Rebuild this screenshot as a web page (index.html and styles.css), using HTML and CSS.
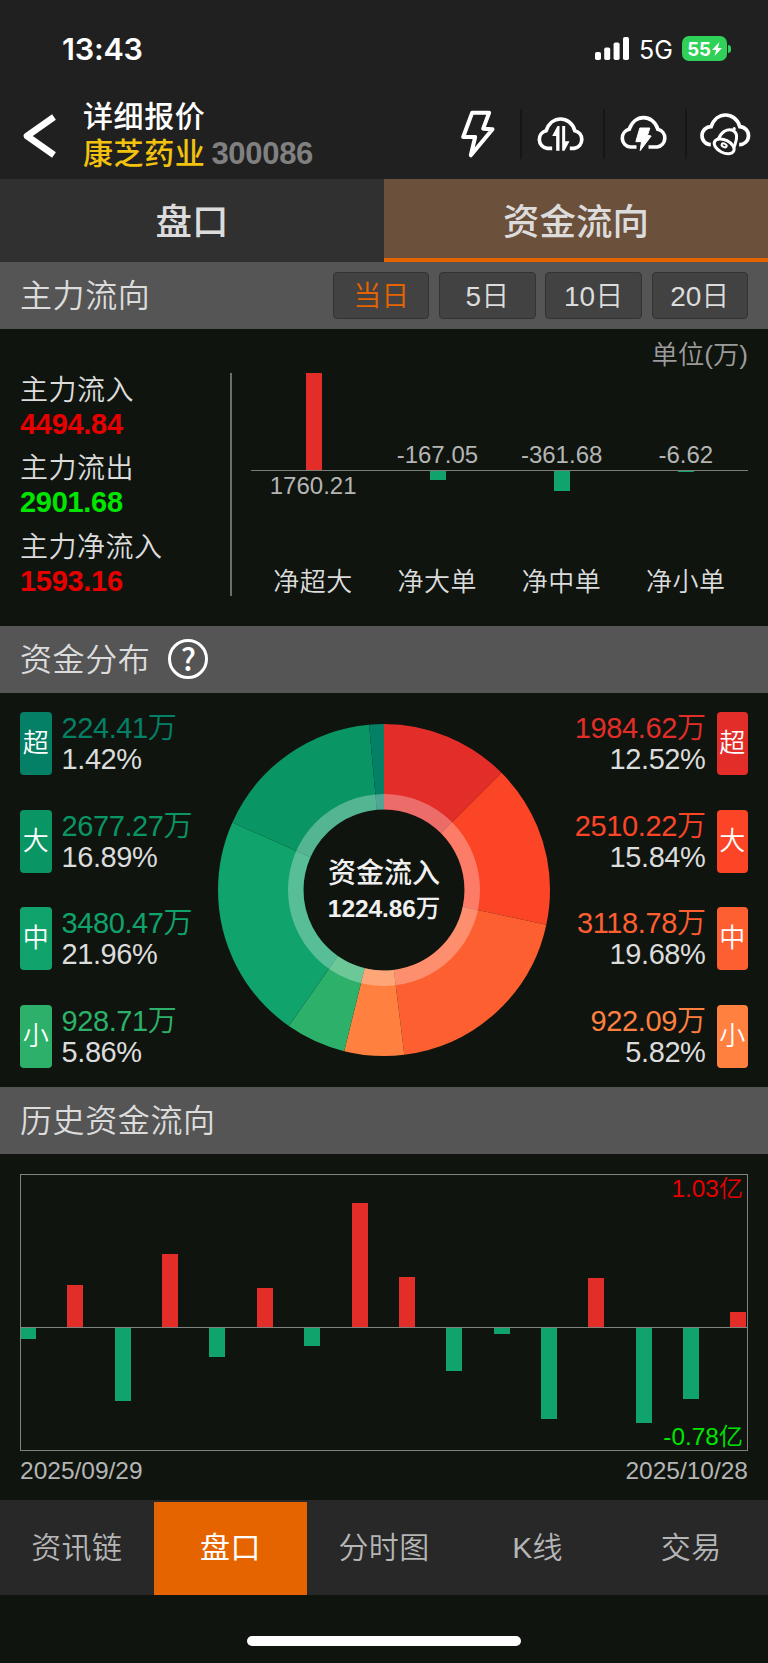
FILE: index.html
```html
<!DOCTYPE html>
<html lang="zh-CN">
<head>
    <meta charset="UTF-8">
    <meta name="viewport" content="width=device-width, initial-scale=1.0">
    <title>康芝药业 300086 - 资金流向</title>
    <link rel="stylesheet" href="styles.css">
</head>
<body>
    <!-- 状态栏 -->
    <div class="status">
        <span class="time">13:43</span>
        <div class="status-right">
            <svg class="signal" width="34" height="23" viewBox="0 0 34 23" fill="#fff">
                <rect x="0" y="15" width="6" height="8" rx="1.8"/>
                <rect x="9.2" y="10.5" width="6" height="12.5" rx="1.8"/>
                <rect x="18.6" y="5.5" width="6" height="17.5" rx="1.8"/>
                <rect x="28" y="0" width="6" height="23" rx="1.8"/>
            </svg>
            <span class="net">5G</span>
            <span class="battery">55<svg width="10" height="14" viewBox="0 0 10 14" fill="#fff"><path d="M7.5 0L0 8h4.2L2.5 14L10 6H5.8z"/></svg></span>
            <span class="battery-cap"></span>
        </div>
    </div>

    <header class="header">
        <svg class="back" width="34" height="46" viewBox="0 0 34 46" fill="none" stroke="#fff" stroke-width="6.6" stroke-linejoin="round">
            <path d="M32 4L5 23L32 42"/>
        </svg>
        <div class="titles">
            <h1>详细报价</h1>
            <p><span class="stock-name">康芝药业</span><span class="stock-code">300086</span></p>
        </div>
        <div class="actions">
            <a class="action">
                <svg viewBox="0 0 248 240" fill="none" stroke="#fff" stroke-width="12" stroke-linejoin="round">
                    <path d="M105 53H156L138 101L166 103L101 181L114 126H78z"/>
                </svg>
            </a>
            <a class="action">
                <svg viewBox="0 0 248 240" fill="none" stroke="#fff" stroke-width="11">
                    <path d="M96 160H81A27 27 0 0 1 78 107C86 84 103 72 121 72S158 84 164 107A27 27 0 0 1 162 160H149"/>
                    <path fill="#fff" stroke="none" d="M108 167V123H96L112 93H118V167zM126 93H135V139H148L133 167H126z"/>
                </svg>
            </a>
            <a class="action">
                <svg viewBox="0 0 248 240" fill="none" stroke="#fff" stroke-width="11">
                    <path d="M100 156H81A27 27 0 0 1 78 103C86 80 103 68 121 68S158 80 164 103A27 27 0 0 1 162 156H136"/>
                    <path fill="#fff" stroke="#fff" stroke-width="3" stroke-linejoin="round" d="M110 99H140L133 121L144 123L111 167L115 140H98z"/>
                </svg>
            </a>
            <a class="action">
                <svg viewBox="0 0 248 240" fill="none" stroke="#fff" stroke-width="11">
                    <path d="M77 149A27 27 0 0 1 78 95C86 72 103 60 121 60S158 72 164 95A27 27 0 0 1 162 149"/>
                    <ellipse cx="117" cy="154" rx="32" ry="19" transform="rotate(27 117 154)" stroke-width="9"/>
                    <ellipse cx="117" cy="151" rx="8" ry="5" transform="rotate(27 117 151)" stroke-width="6"/>
                    <path d="M100 132C108 110 126 101 140 105C160 112 156 132 146 158" stroke-width="9"/>
                    <circle cx="147" cy="101" r="5" fill="#fff" stroke="none"/>
                </svg>
            </a>
        </div>
    </header>

    <nav class="tabs">
        <a class="tab">盘口</a>
        <a class="tab active">资金流向</a>
    </nav>

    <main>
        <!-- 主力流向 -->
        <div class="bar">
            <h2>主力流向</h2>
            <div class="days">
                <button class="day on">当日</button>
                <button class="day">5日</button>
                <button class="day">10日</button>
                <button class="day">20日</button>
            </div>
        </div>
        <section class="flow">
            <p class="unit">单位(万)</p>
            <div class="flow-body">
                <dl class="totals">
                    <dt>主力流入</dt>
                    <dd class="red">4494.84</dd>
                    <dt>主力流出</dt>
                    <dd class="green">2901.68</dd>
                    <dt>主力净流入</dt>
                    <dd class="red">1593.16</dd>
                </dl>
                <div class="net-chart">
                    <div class="net-col">
                        <div class="above"><i class="rise" style="height:97px"></i></div>
                        <div class="below"><span>1760.21</span></div>
                        <p>净超大</p>
                    </div>
                    <div class="net-col">
                        <div class="above"><span>-167.05</span></div>
                        <div class="below"><i class="fall" style="height:9px"></i></div>
                        <p>净大单</p>
                    </div>
                    <div class="net-col">
                        <div class="above"><span>-361.68</span></div>
                        <div class="below"><i class="fall" style="height:20px"></i></div>
                        <p>净中单</p>
                    </div>
                    <div class="net-col">
                        <div class="above"><span>-6.62</span></div>
                        <div class="below"><i class="fall" style="height:1px"></i></div>
                        <p>净小单</p>
                    </div>
                </div>
            </div>
        </section>

        <!-- 资金分布 -->
        <div class="bar">
            <h2>资金分布</h2>
            <span class="help">?</span>
        </div>
        <section class="spread">
            <ul class="legend out">
                <li class="g1"><b>超</b><div><em>224.41万</em><span>1.42%</span></div></li>
                <li class="g2"><b>大</b><div><em>2677.27万</em><span>16.89%</span></div></li>
                <li class="g3"><b>中</b><div><em>3480.47万</em><span>21.96%</span></div></li>
                <li class="g4"><b>小</b><div><em>928.71万</em><span>5.86%</span></div></li>
            </ul>
            <div class="donut">
                <svg width="332" height="332" viewBox="-166 -166 332 332" fill="none">
                    <g stroke-width="85.5" transform="rotate(-90)">
                        <circle r="123.25" pathLength="100" stroke="#e32d28" stroke-dasharray="12.52 100"/>
                        <circle r="123.25" pathLength="100" stroke="#fc4426" stroke-dasharray="15.84 100" stroke-dashoffset="-12.52"/>
                        <circle r="123.25" pathLength="100" stroke="#fd5f31" stroke-dasharray="19.68 100" stroke-dashoffset="-28.36"/>
                        <circle r="123.25" pathLength="100" stroke="#ff803f" stroke-dasharray="5.82 100" stroke-dashoffset="-48.04"/>
                        <circle r="123.25" pathLength="100" stroke="#2db16a" stroke-dasharray="5.86 100" stroke-dashoffset="-53.86"/>
                        <circle r="123.25" pathLength="100" stroke="#10a36b" stroke-dasharray="21.96 100" stroke-dashoffset="-59.72"/>
                        <circle r="123.25" pathLength="100" stroke="#0a9564" stroke-dasharray="16.89 100" stroke-dashoffset="-81.68"/>
                        <circle r="123.25" pathLength="100" stroke="#048066" stroke-dasharray="1.43 100" stroke-dashoffset="-98.57"/>
                    </g>
                    <circle r="88.25" stroke="#fff" stroke-opacity=".3" stroke-width="15.5"/>
                </svg>
                <div class="donut-text">
                    <p>资金流入</p>
                    <strong>1224.86<span>万</span></strong>
                </div>
            </div>
            <ul class="legend in">
                <li class="r1"><div><em>1984.62万</em><span>12.52%</span></div><b>超</b></li>
                <li class="r2"><div><em>2510.22万</em><span>15.84%</span></div><b>大</b></li>
                <li class="r3"><div><em>3118.78万</em><span>19.68%</span></div><b>中</b></li>
                <li class="r4"><div><em>922.09万</em><span>5.82%</span></div><b>小</b></li>
            </ul>
        </section>

        <!-- 历史资金流向 -->
        <div class="bar">
            <h2>历史资金流向</h2>
        </div>
        <section class="history">
            <div class="plot">
                <i class="fall" style="--h:11px"></i>
                <i class="rise" style="--h:42px"></i>
                <i class="fall" style="--h:73px"></i>
                <i class="rise" style="--h:73px"></i>
                <i class="fall" style="--h:29px"></i>
                <i class="rise" style="--h:39px"></i>
                <i class="fall" style="--h:18px"></i>
                <i class="rise" style="--h:124px"></i>
                <i class="rise" style="--h:50px"></i>
                <i class="fall" style="--h:43px"></i>
                <i class="fall" style="--h:6px"></i>
                <i class="fall" style="--h:91px"></i>
                <i class="rise" style="--h:49px"></i>
                <i class="fall" style="--h:95px"></i>
                <i class="fall" style="--h:71px"></i>
                <i class="rise" style="--h:15px"></i>
                <span class="max">1.03亿</span>
                <span class="min">-0.78亿</span>
            </div>
            <div class="dates">
                <span>2025/09/29</span>
                <span>2025/10/28</span>
            </div>
        </section>
    </main>

    <footer class="footer">
        <a>资讯链</a>
        <a class="active">盘口</a>
        <a>分时图</a>
        <a>K线</a>
        <a>交易</a>
    </footer>
    <div class="home"></div>
</body>
</html>
```
FILE: styles.css
```css
* {
    box-sizing: border-box;
    margin: 0;
    padding: 0;
}

body {
    width: 768px;
    height: 1663px;
    background: #0f140f;
    color: #dcdcdc;
    font-family: "Liberation Sans", "Noto Sans CJK SC", sans-serif;
    font-weight: 350;
    overflow: hidden;
}

ul {
    list-style: none;
}

i, em {
    font-style: normal;
}

svg {
    display: block;
}

/* 状态栏 */
.status {
    height: 97px;
    padding: 0 37px 0 62px;
    display: flex;
    justify-content: space-between;
    background: #202020;
    color: #fff;
    font-family: Inter, sans-serif;
}

.time {
    font-size: 30.5px;
    font-weight: 600;
    line-height: 98px;
    letter-spacing: -0.2px;
}

.status-right {
    height: 97px;
    display: flex;
    align-items: center;
}

.net {
    width: 53px;
    padding-left: 10px;
    font-size: 25px;
    font-weight: 400;
    line-height: 26px;
    padding-top: 3px;
}

.battery {
    width: 45px;
    height: 25px;
    display: flex;
    align-items: center;
    justify-content: center;
    gap: 1px;
    border-radius: 7px;
    background: #30d158;
    font-size: 18.5px;
    font-weight: 700;
}

.battery-cap {
    width: 3px;
    height: 8px;
    margin-left: 1px;
    border-radius: 0 3px 3px 0;
    background: #30d158;
}

/* 顶部标题 */
.header {
    height: 82px;
    display: flex;
    background: #202020;
}

.back {
    margin: 16px 0 0 22px;
}

.titles {
    flex: 1;
    margin-left: 27px;
    white-space: nowrap;
}

.titles h1, .stock-name {
    font-size: 30px;
    font-weight: 500;
    letter-spacing: 0.6px;
    color: #fff;
}

.titles h1 {
    line-height: 40px;
}

.titles p {
    display: flex;
    line-height: 34px;
}

.titles .stock-name {
    color: #f3c20f;
}

.stock-code {
    margin-left: 6px;
    font-size: 31px;
    font-weight: 700;
    letter-spacing: -0.3px;
    color: #808080;
}

.actions {
    width: 331px;
    display: flex;
}

.action {
    flex: 1;
    min-width: 0;
    height: 50px;
    margin-top: 12px;
    border-left: 2px solid #161616;
}

.action:first-child {
    border-left-color: transparent;
}

.action svg {
    width: 83px;
    height: 80px;
    margin: -14px 0 0 -2px;
}

/* 标签页 */
.tabs {
    height: 83px;
    display: flex;
}

.tab {
    flex: 1;
    background: #303030;
    font-size: 36.5px;
    font-weight: 500;
    line-height: 87px;
    text-align: center;
}

.tab.active {
    height: 83px;
    background: #6b503b;
    border-bottom: 4px solid #e66400;
}

/* 分区标题 */
.bar {
    height: 67px;
    padding: 0 20px;
    display: flex;
    align-items: center;
    background: #555;
}

.bar h2 {
    padding-bottom: 5px;
    font-size: 32px;
    font-weight: 350;
    letter-spacing: 0.6px;
}

.days {
    margin-left: auto;
    display: flex;
    gap: 9.7px;
}

.day {
    width: 96.5px;
    height: 47px;
    padding-bottom: 3px;
    border: 1px solid #333;
    border-radius: 4px;
    background: #424242;
    color: #dcdcdc;
    font-family: inherit;
    font-size: 28px;
    font-weight: 350;
}

.day.on {
    color: #e66400;
}

.red {
    color: #e60000;
}

.green {
    color: #00e600;
}

.rise {
    background: #e32d28;
}

.fall {
    background: #10a36b;
}

/* 主力流向 */
.flow {
    height: 296.5px;
    padding: 9.5px 20px 0;
}

.unit {
    height: 34px;
    font-size: 26.3px;
    line-height: 32px;
    text-align: right;
    color: #9b9b9b;
}

.flow-body {
    display: flex;
}

.totals {
    width: 212px;
    height: 223px;
    padding-top: 1px;
    border-right: 2px solid #6b6e6b;
    font-size: 28px;
}

.totals dt {
    line-height: 34px;
    letter-spacing: 0.5px;
}

.totals dd {
    height: 34px;
    margin-bottom: 10.5px;
    font-size: 29px;
    font-weight: 700;
    line-height: 32px;
    letter-spacing: -0.3px;
}

.net-chart {
    flex: 1;
    margin-left: 19px;
    display: flex;
}

.net-col {
    flex: 1;
    font-size: 24px;
    color: #b5b5b5;
}

.net-col i {
    width: 16px;
    margin-left: 1px;
}

.above {
    height: 98px;
    display: flex;
    justify-content: center;
    align-items: flex-end;
    border-bottom: 1px solid #7a7d7a;
    line-height: 30px;
}

.below {
    height: 93px;
    display: flex;
    justify-content: center;
    align-items: flex-start;
    line-height: 30px;
}

.net-col p {
    font-size: 26px;
    line-height: 36px;
    letter-spacing: 0.5px;
    text-align: center;
    color: #dcdcdc;
}

/* 资金分布 */
.help {
    width: 40px;
    height: 40px;
    margin-left: 18px;
    border: 3.5px solid #fff;
    border-radius: 50%;
    color: #fff;
    font-family: "Noto Sans CJK SC", sans-serif;
    font-size: 31px;
    font-weight: 500;
    line-height: 31px;
    text-align: center;
}

.spread {
    height: 394.5px;
    padding: 19.5px 20px 0;
    display: flex;
    justify-content: space-between;
}

.legend {
    width: 190px;
}

.legend li {
    height: 63px;
    margin-bottom: 34.5px;
    display: flex;
}

.legend b {
    width: 31.5px;
    border-radius: 4px;
    background: currentColor;
    font-size: 26px;
    font-weight: 350;
    line-height: 63px;
    text-align: center;
}

.legend b::first-letter {
    color: #fff;
}

.legend div {
    margin: 1px 10px 0;
    display: flex;
    flex-direction: column;
    font-size: 29px;
    line-height: 31px;
    letter-spacing: -0.4px;
}

.legend span {
    color: #dcdcdc;
}

.legend.in li {
    justify-content: flex-end;
    text-align: right;
}

.legend.in div {
    margin-right: 11px;
}

.g1 { color: #048066; }
.g2 { color: #0a9564; }
.g3 { color: #10a36b; }
.g4 { color: #2db16a; }
.r1 { color: #e32d28; }
.r2 { color: #fc4426; }
.r3 { color: #fd5f31; }
.r4 { color: #ff803f; }

.donut {
    width: 332px;
    height: 332px;
    margin-top: 12px;
    display: grid;
    place-items: center;
}

.donut > * {
    grid-area: 1 / 1;
}

.donut-text {
    padding-top: 2px;
    text-align: center;
    line-height: 35px;
    color: #f0f0f0;
}

.donut-text p {
    font-size: 28px;
    font-weight: 500;
}

.donut-text strong {
    display: block;
    font-size: 24.5px;
    font-weight: 700;
    letter-spacing: -0.1px;
}

.donut-text span {
    font-weight: 500;
}

/* 历史资金流向 */
.history {
    height: 346px;
    padding: 20px 20px 0;
}

.plot {
    position: relative;
    height: 277px;
    padding-right: 0.5px;
    display: flex;
    justify-content: space-between;
    border: 1px solid #7f827f;
    background: linear-gradient(#7f827f, #7f827f) 0 152px / 100% 1px no-repeat;
}

.plot i {
    width: 16px;
    height: var(--h);
}

.plot i:first-child {
    margin-left: -1px;
    border-left: 1px solid #7f827f;
}

.plot .rise {
    margin-top: calc(152px - var(--h));
}

.plot .fall {
    margin-top: 153px;
}

.plot span {
    position: absolute;
    right: 4px;
    font-size: 24.3px;
    line-height: 28px;
}

.max {
    top: 0;
    color: #e60000;
}

.min {
    bottom: -1px;
    color: #00e600;
}

.dates {
    display: flex;
    justify-content: space-between;
    font-size: 24.5px;
    line-height: 39px;
    color: #b5b5b5;
}

/* 底部导航 */
.footer {
    height: 95px;
    padding-top: 2px;
    display: flex;
    background: #282828;
}

.footer a {
    flex: 1;
    font-size: 30px;
    line-height: 91px;
    letter-spacing: 0.4px;
    text-align: center;
    color: #b5b5b5;
}

.footer .active {
    background: #e66400;
    color: #fff;
    font-weight: 400;
}

.home {
    width: 274px;
    height: 10px;
    margin: 41px auto 0;
    border-radius: 5px;
    background: #fff;
}
```
